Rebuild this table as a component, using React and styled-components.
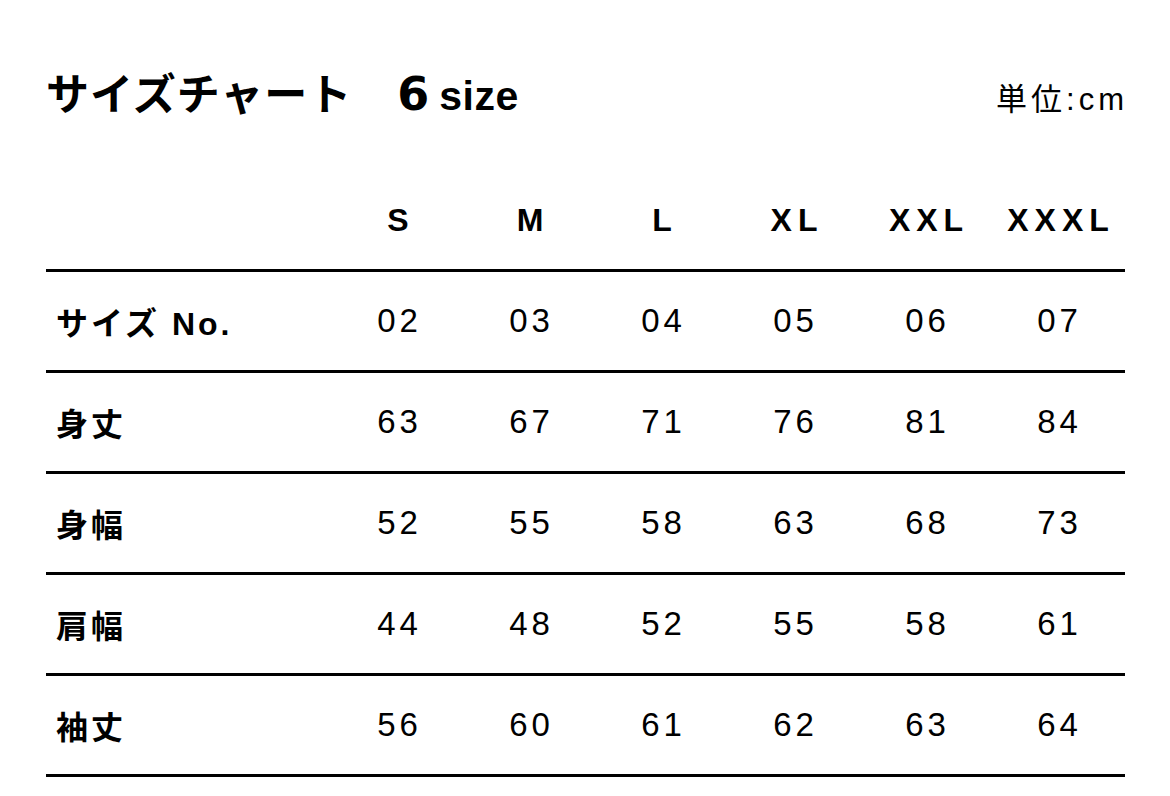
import React from 'react';
import styled, { createGlobalStyle } from 'styled-components';

const sizes = ['S', 'M', 'L', 'XL', 'XXL', 'XXXL'];
const rows = [
  { label: 'サイズ No.', values: ['02', '03', '04', '05', '06', '07'] },
  { label: '身丈', values: ['63', '67', '71', '76', '81', '84'] },
  { label: '身幅', values: ['52', '55', '58', '63', '68', '73'] },
  { label: '肩幅', values: ['44', '48', '52', '55', '58', '61'] },
  { label: '袖丈', values: ['56', '60', '61', '62', '63', '64'] },
];

const GlobalStyle = createGlobalStyle`
  html, body {
    margin: 0;
    background: #fff;
    color: #000;
    font-family: "Liberation Sans", "Noto Sans CJK JP", sans-serif;
  }
`;

const Page = styled.div`
  width: 1170px;
  height: 796px;
  box-sizing: border-box;
  padding: 70px 45px 0 46px;
  overflow: hidden;
`;

const TitleBar = styled.div`
  display: flex;
  align-items: baseline;
  justify-content: space-between;
  height: 48px;
  line-height: 48px;
`;

const Title = styled.h1`
  margin: 0;
  font-size: 43px;
  font-weight: 700;
  letter-spacing: 1px;
  display: flex;
  align-items: baseline;
`;

const Count = styled.span`
  margin-left: 45px;
  font-size: 46px;
  font-family: "DejaVu Sans", sans-serif;
`;

const CountUnit = styled.span`
  margin-left: 9px;
  font-size: 41px;
  letter-spacing: 0.5px;
`;

const Unit = styled.span`
  font-size: 31px;
  letter-spacing: 4px;
  margin-right: -3px;
`;

const Table = styled.div`
  margin-top: 53px;
`;

const Row = styled.div`
  display: grid;
  grid-template-columns: 287px repeat(6, 132px);
  align-items: center;
  height: 98px;
  border-bottom: 3px solid #000;
`;

const HeadCell = styled.div`
  text-align: center;
  font-size: 32px;
  font-weight: 700;
  letter-spacing: 6px;
  padding-left: 4px;
`;

const Label = styled.div`
  padding-left: 10px;
  font-size: 32px;
  font-weight: 700;
  letter-spacing: 3px;
`;

const Value = styled.div`
  text-align: center;
  font-size: 33px;
  letter-spacing: 4px;
  padding-left: 1px;
`;

export default function App() {
  return (
    <Page>
      <GlobalStyle />
      <TitleBar>
        <Title>
          サイズチャート<Count>6</Count>
          <CountUnit>size</CountUnit>
        </Title>
        <Unit>単位:cm</Unit>
      </TitleBar>
      <Table>
        <Row>
          <div />
          {sizes.map((s) => (
            <HeadCell key={s}>{s}</HeadCell>
          ))}
        </Row>
        {rows.map((r) => (
          <Row key={r.label}>
            <Label>{r.label}</Label>
            {r.values.map((v, i) => (
              <Value key={i}>{v}</Value>
            ))}
          </Row>
        ))}
      </Table>
    </Page>
  );
}
